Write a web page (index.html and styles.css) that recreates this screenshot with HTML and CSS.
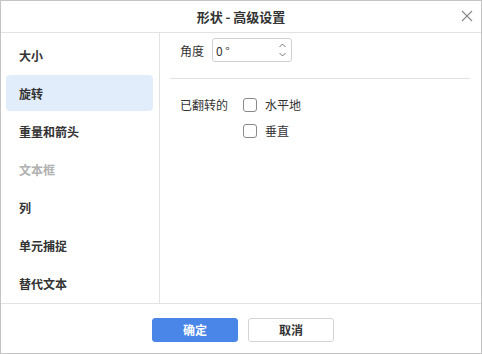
FILE: index.html
```html
<!DOCTYPE html>
<html lang="zh">
<head>
    <meta charset="UTF-8">
    <title>形状 - 高级设置</title>
    <link rel="stylesheet" href="styles.css">
</head>
<body>
    <div class="dialog">
        <div class="dialog-header">
            <span class="dialog-title">形状 - 高级设置</span>
            <button class="close-btn" aria-label="关闭">
                <svg width="12" height="12" viewBox="0 0 12 12">
                    <path d="M1 1 L11 11 M11 1 L1 11" stroke="#888" stroke-width="1.1" fill="none"/>
                </svg>
            </button>
        </div>

        <div class="dialog-body">
            <!-- Меню разделов -->
            <ul class="side-menu">
                <li class="menu-item">大小</li>
                <li class="menu-item active">旋转</li>
                <li class="menu-item">重量和箭头</li>
                <li class="menu-item disabled">文本框</li>
                <li class="menu-item">列</li>
                <li class="menu-item">单元捕捉</li>
                <li class="menu-item">替代文本</li>
            </ul>

            <div class="panel">
                <div class="row angle-row">
                    <label class="row-label">角度</label>
                    <div class="spin-input">
                        <span class="spin-value">0 °</span>
                        <div class="spin-arrows">
                            <svg width="7" height="5" viewBox="0 0 7 5"><path d="M0.5 4 L3.5 1 L6.5 4" stroke="#777" fill="none"/></svg>
                            <svg width="7" height="5" viewBox="0 0 7 5"><path d="M0.5 1 L3.5 4 L6.5 1" stroke="#777" fill="none"/></svg>
                        </div>
                    </div>
                </div>

                <div class="separator"></div>

                <div class="row flip-row">
                    <span class="row-label flip-label">已翻转的</span>
                    <div class="checks">
                        <label class="check"><span class="check-box"></span>水平地</label>
                        <label class="check"><span class="check-box"></span>垂直</label>
                    </div>
                </div>
            </div>
        </div>

        <div class="dialog-footer">
            <button class="btn btn-primary">确定</button>
            <button class="btn">取消</button>
        </div>
    </div>
</body>
</html>
```

FILE: styles.css
```css
:root {
    --text: #333;
    --border: #c4c4c4;
    --line: #e2e2e2;
    --accent: #4a86e8;
    --active-bg: #e1edfb;
}

* {
    box-sizing: border-box;
    margin: 0;
    padding: 0;
}

body {
    font-family: "Noto Sans CJK SC", "Noto Sans", sans-serif;
    color: var(--text);
    background: #fff;
}

.dialog {
    width: 482px;
    height: 354px;
    border: 1px solid var(--border);
    display: flex;
    flex-direction: column;
    background: #fff;
}

/* Заголовок */
.dialog-header {
    height: 32px;
    flex: none;
    border-bottom: 1px solid var(--line);
    display: flex;
    align-items: center;
    justify-content: center;
    position: relative;
}

.dialog-title {
    font-size: 13px;
    font-weight: bold;
    line-height: 1;
}

.close-btn {
    position: absolute;
    right: 8px;
    top: 9px;
    width: 12px;
    height: 12px;
    border: none;
    background: none;
    display: flex;
}

/* Тело */
.dialog-body {
    flex: 1;
    display: flex;
    min-height: 0;
}

.side-menu {
    list-style: none;
    width: 159px;
    flex: none;
    border-right: 1px solid var(--line);
    padding: 4px 6px 0 5px;
}

.menu-item {
    height: 36px;
    margin-bottom: 2px;
    padding-left: 13px;
    display: flex;
    align-items: center;
    font-size: 12px;
    font-weight: bold;
    border-radius: 4px;
}

.menu-item.active {
    background: var(--active-bg);
}

.menu-item.disabled {
    color: #b0b0b0;
}

.panel {
    flex: 1;
    padding: 5px 11px 0 10px;
    font-size: 12px;
}

.row {
    display: flex;
    padding-left: 10px;
}

.angle-row {
    align-items: center;
    gap: 8px;
}

.spin-input {
    width: 80px;
    height: 24px;
    border: 1px solid #d0d0d0;
    border-radius: 3px;
    display: flex;
    align-items: center;
    justify-content: space-between;
    padding: 0 5px 0 3px;
}

.spin-arrows {
    display: flex;
    flex-direction: column;
    gap: 4px;
}

.spin-arrows svg {
    display: block;
}

.separator {
    height: 1px;
    background: var(--line);
    margin: 16px 0 0;
}

.flip-row {
    margin-top: 18px;
    align-items: flex-start;
}

.flip-label {
    width: 63px;
    line-height: 16px;
}

.checks {
    display: flex;
    flex-direction: column;
    gap: 10px;
}

.check {
    display: flex;
    align-items: center;
    gap: 8px;
    line-height: 16px;
}

.check-box {
    width: 14px;
    height: 14px;
    border: 1px solid #8a8a8a;
    border-radius: 3px;
    background: #fff;
}

/* Кнопки */
.dialog-footer {
    height: 50px;
    flex: none;
    border-top: 1px solid var(--line);
    display: flex;
    align-items: center;
    justify-content: center;
    gap: 10px;
    padding: 2px 0 0 4px;
}

.btn {
    width: 86px;
    height: 24px;
    border: 1px solid #d4d4d4;
    border-radius: 3px;
    background: #fff;
    color: var(--text);
    font-family: inherit;
    font-size: 12px;
    font-weight: bold;
}

.btn-primary {
    background: var(--accent);
    border-color: var(--accent);
    color: #fff;
}
```
